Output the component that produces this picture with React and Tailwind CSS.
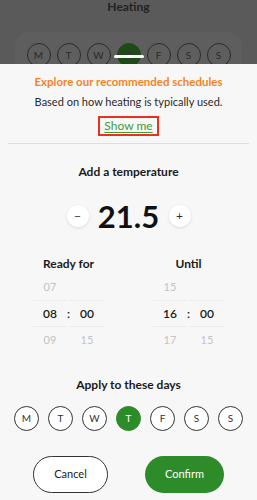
import React, { useState } from 'react';

const DAYS = ['M', 'T', 'W', 'T', 'F', 'S', 'S'];

const Picker = ({ title, hours, mins }) => (
  <div className="flex flex-col items-center">
    <div className="text-[12px] font-bold text-[#1a1a1a] h-[20px] leading-[20px]">{title}</div>
    <div className="mt-[1px] flex items-start">
      <div className="w-[34px] flex flex-col">
        <div className="h-[26px] flex items-center justify-center text-[11px] text-[#c4c4c4] border-b border-[#ececec]">{hours[0]}</div>
        <div className="h-[26px] flex items-center justify-center text-[12px] font-semibold text-[#1a1a1a] border-b border-[#ececec]">{hours[1]}</div>
        <div className="h-[26px] flex items-center justify-center text-[11px] text-[#c4c4c4]">{hours[2]}</div>
      </div>
      <div className="w-[3px] h-[78px] flex items-center justify-center text-[12px] font-semibold text-[#1a1a1a]">:</div>
      <div className="w-[34px] flex flex-col">
        <div className="h-[26px] flex items-center justify-center text-[11px] text-[#c4c4c4] border-b border-[#ececec]">{mins[0]}</div>
        <div className="h-[26px] flex items-center justify-center text-[12px] font-semibold text-[#1a1a1a] border-b border-[#ececec]">{mins[1]}</div>
        <div className="h-[26px] flex items-center justify-center text-[11px] text-[#c4c4c4]">{mins[2]}</div>
      </div>
    </div>
  </div>
);

export default function App() {
  const [temp, setTemp] = useState(21.5);
  const [selected, setSelected] = useState(3);

  return (
    <div className="w-[257px] h-[500px] overflow-hidden bg-[#5a5a5a] flex flex-col" style={{ fontFamily: 'Lato, "Open Sans", sans-serif' }}>
      {/* Dimmed background */}
      <div className="h-[64px] relative shrink-0 overflow-hidden">
        <div className="text-center text-[12px] font-bold text-[#222] leading-[14px]">Heating</div>
        <div className="mx-[15px] mt-[18px] h-[60px] rounded-[14px] bg-[#5e5e5e] flex justify-center gap-[6px] pt-[11px]">
          {DAYS.map((d, i) => (
            <div
              key={i}
              className={`w-[24px] h-[24px] rounded-full border flex items-center justify-center text-[10px] ${
                i === 3 ? 'bg-[#1d4a17] border-[#1d4a17] text-[#333]' : 'border-[#2a2a2a] text-[#2a2a2a]'
              }`}
            >
              {d}
            </div>
          ))}
        </div>
        <div className="absolute left-[114px] top-[55px] w-[30px] h-[3px] rounded-full bg-white" />
      </div>

      {/* Sheet */}
      <div className="flex-1 bg-[#f7f7f7] flex flex-col">
        <div className="text-center text-[11.5px] font-bold text-[#f5841f] mt-[10px] leading-[16px]">
          Explore our recommended schedules
        </div>
        <div className="text-center text-[11px] text-[#2a2a2a] mt-[4px] leading-[16px]">
          Based on how heating is typically used.
        </div>
        <div className="flex justify-center mt-[6px]">
          <button className="border-2 border-[#e8321e] px-[4px] h-[20px] text-[12px] text-[#3f9a3a] underline underline-offset-2 leading-none">
            Show me
          </button>
        </div>
        <div className="mx-[8px] mt-[7px] border-t border-[#dedede]" />

        <div className="text-center text-[12px] font-bold text-[#1a1a1a] mt-[20px] leading-[16px]">Add a temperature</div>

        <div className="flex items-center justify-center mt-[16px] h-[40px]">
          <button
            onClick={() => setTemp(t => t - 0.5)}
            className="w-[22px] h-[22px] rounded-full bg-white shadow-[0_1px_3px_rgba(0,0,0,0.12)] flex items-center justify-center text-[12px] text-[#333]"
          >
            −
          </button>
          <div className="w-[80px] text-center text-[31px] font-bold text-[#111] leading-none">{temp.toFixed(1)}</div>
          <button
            onClick={() => setTemp(t => t + 0.5)}
            className="w-[22px] h-[22px] rounded-full bg-white shadow-[0_1px_3px_rgba(0,0,0,0.12)] flex items-center justify-center text-[12px] text-[#333]"
          >
            +
          </button>
        </div>

        <div className="flex justify-between px-[33px] mt-[18px]">
          <Picker title="Ready for" hours={['07', '08', '09']} mins={['', '00', '15']} />
          <Picker title="Until" hours={['15', '16', '17']} mins={['', '00', '15']} />
        </div>

        <div className="text-center text-[12px] font-bold text-[#1a1a1a] mt-[24px] leading-[16px]">Apply to these days</div>

        <div className="flex justify-center gap-[9px] mt-[13px]">
          {DAYS.map((d, i) => (
            <button
              key={i}
              onClick={() => setSelected(i)}
              className={`w-[25px] h-[25px] rounded-full border flex items-center justify-center text-[10px] ${
                i === selected ? 'bg-[#2e8b2a] border-[#2e8b2a] text-white' : 'border-[#333] text-[#333] bg-white'
              }`}
            >
              {d}
            </button>
          ))}
        </div>

        <div className="flex justify-center gap-[37px] mt-[25px]">
          <button className="w-[75px] h-[37px] rounded-full border border-[#333] bg-white text-[11px] text-[#222]">Cancel</button>
          <button className="w-[79px] h-[37px] rounded-full bg-[#2e8b2a] text-[11px] text-white">Confirm</button>
        </div>
      </div>
    </div>
  );
}
